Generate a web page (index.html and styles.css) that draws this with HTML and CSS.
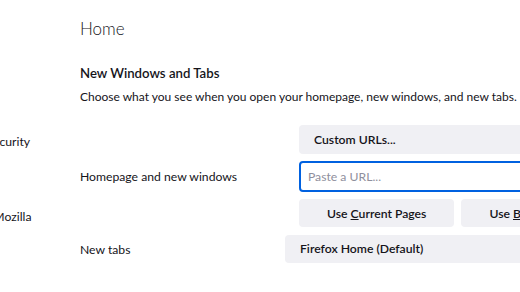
FILE: index.html
```html
<!DOCTYPE html>
<html lang="en">
<head>
  <meta charset="UTF-8" />
  <title>Settings - Home</title>
  <meta name="viewport" content="width=device-width, initial-scale=1.0" />
  <link rel="stylesheet" href="styles.css">
</head>
<body>
  <div class="page">
    <nav class="nav">
      <div class="nav-item">Privacy &amp; Security</div>
      <div class="nav-item nav-item-last">More from Mozilla</div>
    </nav>

    <main class="main">
      <h1 class="title">Home</h1>
      <h2 class="section-title">New Windows and Tabs</h2>
      <p class="description">Choose what you see when you open your homepage, new windows, and new tabs.</p>

      <div class="setting">
        <div class="label">Homepage and new windows</div>
        <div class="controls">
          <div class="menulist">Custom URLs...</div>
          <input class="url-input" type="text" placeholder="Paste a URL..." />
          <div class="button-row">
            <button class="btn">Use <u>C</u>urrent Pages</button>
            <button class="btn">Use <u>B</u>ookmark…</button>
          </div>
        </div>
      </div>

      <div class="setting">
        <div class="label">New tabs</div>
        <div class="menulist menulist-tabs">Firefox Home (Default)</div>
      </div>
    </main>
  </div>
</body>
</html>
```

FILE: styles.css
```css
body {
  margin: 0;
  width: 520px;
  height: 292px;
  overflow: hidden;
  background: #ffffff;
  color: #15141a;
  font-family: Lato, 'Noto Sans', sans-serif;
  font-size: 12.2px;
}
.page {
  display: flex;
  align-items: flex-start;
}
.nav {
  flex: none;
  width: 180px;
  margin-left: -100px;
  padding-top: 132px;
  display: flex;
  flex-direction: column;
}
.nav-item {
  height: 20px;
  line-height: 20px;
  padding-left: 33px;
  white-space: nowrap;
}
.nav-item-last {
  margin-top: 55px;
}
.main {
  flex: none;
  width: 640px;
}
.title {
  margin: 17px 0 0;
  font-size: 17px;
  line-height: 24px;
  font-weight: 300;
}
.section-title {
  margin: 22px 0 0;
  font-size: 13.2px;
  line-height: 20px;
  font-weight: 600;
}
.description {
  margin: 5px 0 0;
  font-size: 12px;
  line-height: 18px;
  white-space: nowrap;
}
.setting {
  display: grid;
  grid-template-columns: 219px 1fr;
  align-items: center;
  margin-top: 8px;
}
.setting:first-of-type {
  margin-top: 19px;
}
.controls {
  display: flex;
  flex-direction: column;
  gap: 7px;
  width: 340px;
}
.menulist {
  height: 29px;
  line-height: 29px;
  padding: 0 15px;
  border-radius: 4px;
  background: #f0f0f4;
  font-weight: 600;
  white-space: nowrap;
}
.menulist-tabs {
  height: 28px;
  line-height: 28px;
  width: 260px;
  margin-left: -14px;
}
.url-input {
  box-sizing: border-box;
  height: 31px;
  margin: 0;
  padding: 0 7px;
  border: 2px solid #0061e0;
  border-radius: 4px;
  font: inherit;
  color: #15141a;
  outline: none;
}
.url-input::placeholder {
  color: #8f8f9d;
}
.button-row {
  display: flex;
  gap: 7px;
}
.btn {
  flex: none;
  height: 28px;
  padding: 0 28px;
  border: none;
  border-radius: 4px;
  background: #f0f0f4;
  color: #15141a;
  font: inherit;
  font-weight: 600;
  white-space: nowrap;
}
```
